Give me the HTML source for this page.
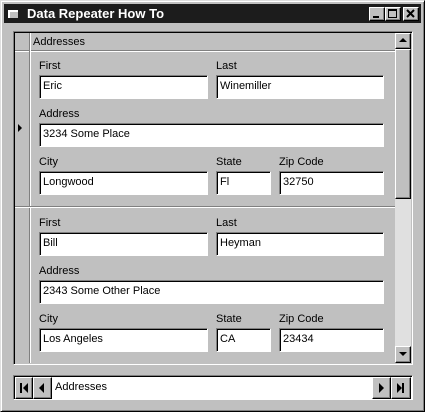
<!DOCTYPE html>
<html><head><style>
*{margin:0;padding:0;box-sizing:border-box}
body{width:425px;height:412px;background:#c0c0c0;position:relative;overflow:hidden;font-family:"Liberation Sans",Arial,sans-serif;font-size:11px;color:#000}
.a{position:absolute}
.win{left:0;top:0;width:425px;height:412px;border:1px solid #dfdfdf;border-right-color:#000;border-bottom-color:#000;box-shadow:inset 1px 1px 0 #fff,inset -1px -1px 0 #808080}
.title{left:4px;top:4px;width:417px;height:19px;background:#1c1c1c;color:#fff;font-weight:bold;font-size:13px;line-height:19px;padding-left:23px}
.tb{top:7px;width:16px;height:14px;background:#c0c0c0;border:1px solid;border-color:#fff #000 #000 #fff;box-shadow:inset -1px -1px 0 #808080}
.tx{background:#fff;border:1px solid;border-color:#808080 #fff #fff #808080;box-shadow:inset 1px 1px 0 #000;padding:2px 0 0 3px;height:24px;font-size:11px;line-height:16px}
.lb{font-size:11px}
.btn{background:#c0c0c0;border:1px solid;border-color:#fff #000 #000 #fff;box-shadow:inset -1px -1px 0 #808080}
</style></head><body>
<div class="a win"></div>
<div class="a title">Data Repeater How To</div>
<svg class="a" style="left:7px;top:8px" width="14" height="12"><rect x="1" y="2" width="10" height="8" fill="#fff"/><rect x="3" y="4" width="8" height="6" fill="#c0c0c0"/></svg>
<div class="a tb" style="left:369px"></div>
<div class="a tb" style="left:385px"></div>
<div class="a tb" style="left:403px"></div>
<svg class="a" style="left:369px;top:7px" width="52" height="14">
<rect x="4" y="9" width="6" height="2"/>
<rect x="19.5" y="2.5" width="8" height="8" fill="none" stroke="#000"/><rect x="19" y="2" width="9" height="2"/>
<path d="M38 3L45 10M45 3L38 10" stroke="#000" stroke-width="2"/>
</svg>

<div class="a" style="left:13px;top:31px;width:400px;height:334px;border:1px solid;border-color:#808080 #fff #fff #808080;box-shadow:inset 1px 1px 0 #000"></div>
<div class="a" style="left:15px;top:50px;width:380px;height:1px;background:#808080"></div>
<div class="a" style="left:15px;top:51px;width:380px;height:1px;background:#fff"></div>
<div class="a" style="left:29px;top:33px;width:1px;height:330px;background:#808080"></div>
<div class="a" style="left:30px;top:33px;width:1px;height:330px;background:#fff"></div>
<div class="a lb" style="left:33px;top:36px">Addresses</div>
<div class="a" style="left:15px;top:206px;width:380px;height:1px;background:#808080"></div>
<div class="a" style="left:15px;top:207px;width:380px;height:1px;background:#fff"></div>
<svg class="a" style="left:17px;top:124px" width="6" height="8"><path d="M1 0L5 4L1 8Z" fill="#000"/></svg>

<div class="a" style="left:395px;top:33px;width:16px;height:330px;background:#e0e0e0"></div>
<div class="a btn" style="left:395px;top:33px;width:16px;height:16px"></div>
<svg class="a" style="left:399px;top:38px" width="8" height="5"><path d="M0 4L4 0L8 4Z" fill="#000"/></svg>
<div class="a btn" style="left:395px;top:49px;width:16px;height:150px"></div>
<div class="a btn" style="left:395px;top:346px;width:16px;height:17px"></div>
<svg class="a" style="left:399px;top:352px" width="8" height="5"><path d="M0 0L8 0L4 4Z" fill="#000"/></svg>

<div class="a lb" style="left:39px;top:60px">First</div>
<div class="a lb" style="left:216px;top:60px">Last</div>
<div class="a tx" style="left:39px;top:75px;width:169px">Eric</div>
<div class="a tx" style="left:216px;top:75px;width:168px">Winemiller</div>
<div class="a lb" style="left:39px;top:108px">Address</div>
<div class="a tx" style="left:39px;top:123px;width:345px">3234 Some Place</div>
<div class="a lb" style="left:39px;top:156px">City</div>
<div class="a lb" style="left:216px;top:156px">State</div>
<div class="a lb" style="left:279px;top:156px">Zip Code</div>
<div class="a tx" style="left:39px;top:171px;width:169px">Longwood</div>
<div class="a tx" style="left:216px;top:171px;width:55px">Fl</div>
<div class="a tx" style="left:279px;top:171px;width:105px">32750</div>

<div class="a lb" style="left:39px;top:217px">First</div>
<div class="a lb" style="left:216px;top:217px">Last</div>
<div class="a tx" style="left:39px;top:232px;width:169px">Bill</div>
<div class="a tx" style="left:216px;top:232px;width:168px">Heyman</div>
<div class="a lb" style="left:39px;top:265px">Address</div>
<div class="a tx" style="left:39px;top:280px;width:345px">2343 Some Other Place</div>
<div class="a lb" style="left:39px;top:313px">City</div>
<div class="a lb" style="left:216px;top:313px">State</div>
<div class="a lb" style="left:279px;top:313px">Zip Code</div>
<div class="a tx" style="left:39px;top:328px;width:169px">Los Angeles</div>
<div class="a tx" style="left:216px;top:328px;width:55px">CA</div>
<div class="a tx" style="left:279px;top:328px;width:105px">23434</div>

<div class="a" style="left:13px;top:375px;width:400px;height:25px;border:1px solid;border-color:#808080 #fff #fff #808080;box-shadow:inset 1px 1px 0 #000;background:#fff"></div>
<div class="a lb" style="left:55px;top:381px">Addresses</div>
<div class="a btn" style="left:15px;top:377px;width:18px;height:22px"></div>
<div class="a btn" style="left:33px;top:377px;width:19px;height:22px"></div>
<div class="a btn" style="left:372px;top:377px;width:19px;height:22px"></div>
<div class="a btn" style="left:391px;top:377px;width:20px;height:22px"></div>
<svg class="a" style="left:15px;top:377px" width="396" height="22">
<rect x="5" y="6" width="2" height="10"/><path d="M13 6L8 11L13 16Z"/>
<path d="M29 6L24 11L29 16Z"/>
<path d="M364 6L369 11L364 16Z"/>
<path d="M382 6L387 11L382 16Z"/><rect x="387" y="6" width="2" height="10"/>
</svg>
</body></html>
